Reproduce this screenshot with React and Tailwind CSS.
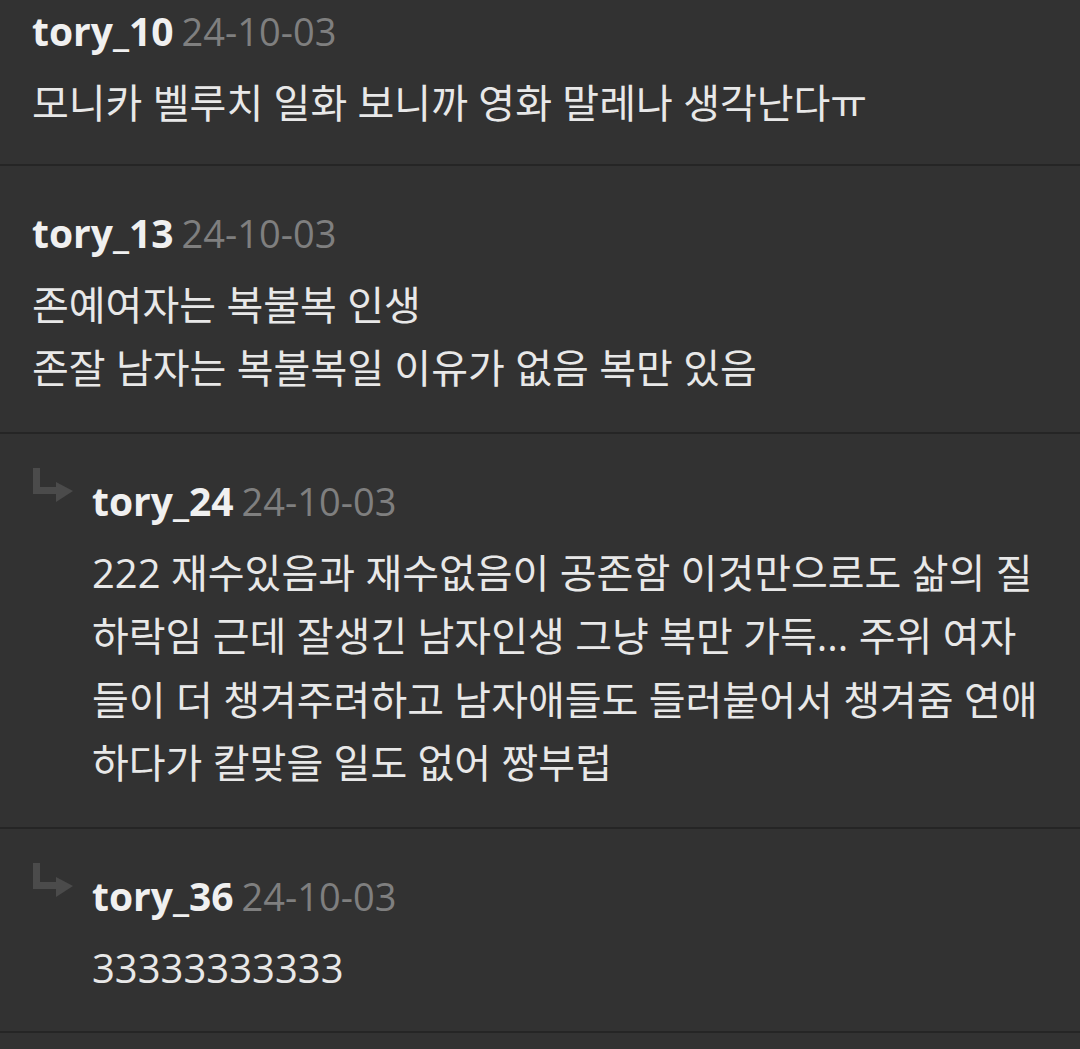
import React from "react";

const comments = [
  {
    user: "tory_10",
    date: "24-10-03",
    lines: ["모니카 벨루치 일화 보니까 영화 말레나 생각난다ㅠ"],
    first: true,
  },
  {
    user: "tory_13",
    date: "24-10-03",
    lines: ["존예여자는 복불복 인생", "존잘 남자는 복불복일 이유가 없음 복만 있음"],
  },
  {
    user: "tory_24",
    date: "24-10-03",
    reply: true,
    lines: [
      "222 재수있음과 재수없음이 공존함 이것만으로도 삶의 질",
      "하락임 근데 잘생긴 남자인생 그냥 복만 가득... 주위 여자",
      "들이 더 챙겨주려하고 남자애들도 들러붙어서 챙겨줌 연애",
      "하다가 칼맞을 일도 없어 짱부럽",
    ],
  },
  {
    user: "tory_36",
    date: "24-10-03",
    reply: true,
    lines: ["33333333333"],
  },
];

function ReplyArrow() {
  return (
    <svg width="42" height="36" viewBox="0 0 42 36" className="shrink-0">
      <path d="M1 1h7v19h18v7H1z" fill="#4b4b4b" />
      <path d="M24 15l17 9-17 11z" fill="#4b4b4b" />
    </svg>
  );
}

function Comment({ c }) {
  return (
    <div
      className={`border-b-2 border-[#252525] pl-[32px] ${c.first ? "pt-[7px] pb-[29px]" : "pt-[43px] pb-[32px]"}`}
    >
      <div className="flex">
        {c.reply && (
          <div className="w-[60px] shrink-0 -mt-[10px]">
            <ReplyArrow />
          </div>
        )}
        <div className="flex-1">
          <div className="flex items-baseline h-[48px] leading-[48px]">
            <span className="text-[39px] font-bold text-[#f0f0f0]">{c.user}</span>
            <span className="ml-[8px] text-[38px] text-[#7f7f7f]">{c.date}</span>
          </div>
          <div className="mt-[16px] text-[40px] leading-[63.5px] text-[#e8e8e8]">
            {c.lines.map((l, i) => (
              <div key={i} className="whitespace-nowrap">
                {l}
              </div>
            ))}
          </div>
        </div>
      </div>
    </div>
  );
}

export default function App() {
  return (
    <div
      className="min-h-screen bg-[#323232] overflow-hidden"
      style={{ fontFamily: '"Open Sans", "Noto Sans CJK KR", sans-serif' }}
    >
      {comments.map((c) => (
        <Comment key={c.user} c={c} />
      ))}
    </div>
  );
}
